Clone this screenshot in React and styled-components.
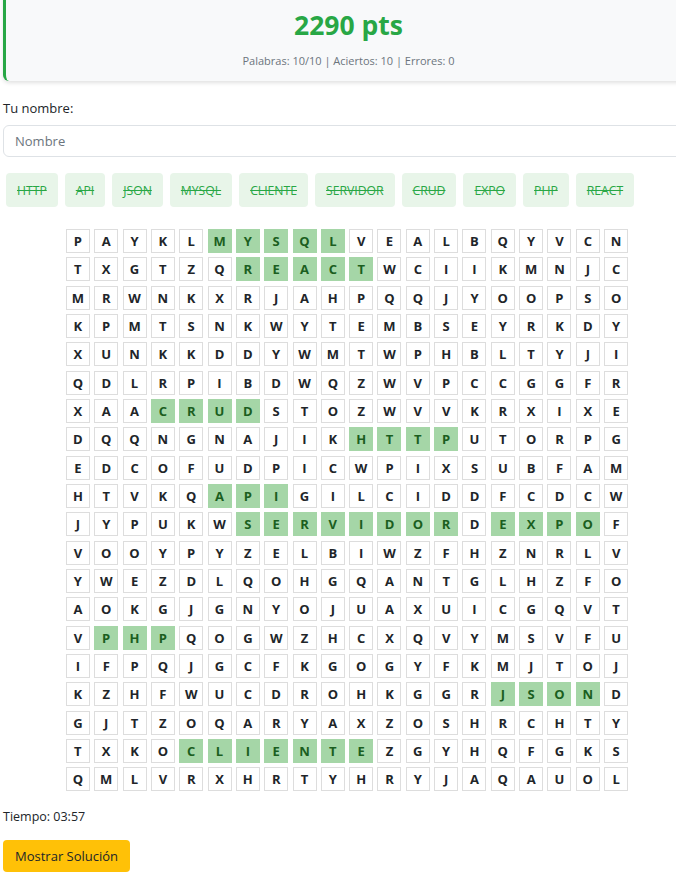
import React from 'react'
import styled, { createGlobalStyle } from 'styled-components'

const GlobalStyle = createGlobalStyle`
  body {
    margin: 0;
    overflow-x: hidden;
    background: #fff;
    font-family: "Open Sans", "Noto Sans", sans-serif;
    color: #212529;
  }
`

const GRID = [
  'PAYKLMYSQLVEALBQYVCN',
  'TXGTZQREACTWCIIKMNJC',
  'MRWNKXRJAHPQQJYOOPSO',
  'KPMTSNKWYTEMBSEYRKDY',
  'XUNKKDDYWMTWPHBLTYJI',
  'QDLRPIBDWQZWVPCCGGFR',
  'XAACRUDSTOZWVVKRXIXE',
  'DQQNGNAJIKHTTPUTORPG',
  'EDCOFUDPICWPIXSUBFAM',
  'HTVKQAPIGILCIDDFCDCW',
  'JYPUKWSERVIDORDEXPOF',
  'VOOYPYZELBIWZFHZNRLV',
  'YWEZDLQOHGQANTGLHZFO',
  'AOKGJGNYOJUAXUICGQVT',
  'VPHPQOGWZHCXQVYMSVFU',
  'IFPQJGCFKGOGYFKMJTOJ',
  'KZHFWUCDROHKGGRJSOND',
  'GJTZOQARYAXZOSHRCHTY',
  'TXKOCLIENTEZGYHQFGKS',
  'QMLVRXHRTYHRYJAQAUOL',
]

// [row, fromCol, toCol] (0-based, inclusive)
const FOUND = [
  [0, 5, 9],
  [1, 6, 10],
  [6, 3, 6],
  [7, 10, 13],
  [9, 5, 7],
  [10, 6, 13],
  [10, 15, 18],
  [14, 1, 3],
  [16, 15, 18],
  [18, 4, 10],
]

const WORDS = ['HTTP', 'API', 'JSON', 'MYSQL', 'CLIENTE', 'SERVIDOR', 'CRUD', 'EXPO', 'PHP', 'REACT']

const isFound = (r, c) => FOUND.some(([fr, a, b]) => fr === r && c >= a && c <= b)

function App() {
  return (
    <Page>
      <GlobalStyle />
      <ScoreCard>
        <Points>2290 pts</Points>
        <Stats>Palabras: 10/10 | Aciertos: 10 | Errores: 0</Stats>
      </ScoreCard>

      <Label>Tu nombre:</Label>
      <NameInput placeholder="Nombre" />

      <WordList>
        {WORDS.map((w) => (
          <Chip key={w}>{w}</Chip>
        ))}
      </WordList>

      <Board>
        {GRID.map((row, r) =>
          row.split('').map((ch, c) => (
            <Cell key={r + '-' + c} $found={isFound(r, c)}>
              {ch}
            </Cell>
          ))
        )}
      </Board>

      <Timer>Tiempo: 03:57</Timer>
      <SolveButton>Mostrar Solución</SolveButton>
    </Page>
  )
}

export default App

const Page = styled.div`
  width: 688px;
  margin-left: 3px;
  padding-bottom: 20px;
`

const ScoreCard = styled.div`
  margin-top: -8px;
  background: #f8f9fa;
  border-left: 3px solid #28a745;
  border-radius: 6px;
  box-shadow: 0 2px 4px rgba(0, 0, 0, 0.12);
  padding: 16px 16px 11px;
  text-align: center;
`

const Points = styled.h2`
  margin: 0;
  font-size: 26.5px;
  line-height: 34px;
  font-weight: 700;
  color: #28a745;
`

const Stats = styled.div`
  margin-top: 10px;
  font-size: 11px;
  line-height: 18px;
  color: #6c757d;
`

const Label = styled.div`
  margin-top: 18px;
  font-size: 13px;
  line-height: 18px;
`

const NameInput = styled.input`
  display: block;
  box-sizing: border-box;
  width: 100%;
  height: 32px;
  margin-top: 8px;
  padding: 0 11px;
  border: 1px solid #dee2e6;
  border-radius: 6px;
  font-family: inherit;
  font-size: 13px;
  color: #212529;
  &::placeholder {
    color: #6c757d;
  }
`

const WordList = styled.div`
  display: flex;
  gap: 7px;
  margin-top: 16px;
  padding-left: 3px;
`

const Chip = styled.span`
  display: flex;
  align-items: center;
  height: 34px;
  padding: 0 11px;
  background: #e8f5e9;
  border-radius: 4px;
  color: #28a745;
  font-size: 12.2px;
  text-decoration: line-through;
`

const Board = styled.div`
  display: grid;
  grid-template-columns: repeat(20, 24px);
  grid-auto-rows: 24px;
  gap: 4.33px;
  justify-content: center;
  margin-top: 22px;
`

const Cell = styled.div`
  box-sizing: border-box;
  display: flex;
  align-items: center;
  justify-content: center;
  border: 1px solid ${(p) => (p.$found ? '#a5d6a7' : '#ddd')};
  background: ${(p) => (p.$found ? '#a5d6a7' : '#fff')};
  color: ${(p) => (p.$found ? '#1b5e20' : '#212529')};
  font-size: 13px;
  font-weight: 700;
`

const Timer = styled.div`
  margin-top: 17px;
  font-size: 12.5px;
  line-height: 18px;
`

const SolveButton = styled.button`
  display: block;
  margin-top: 14px;
  height: 32px;
  padding: 0 12px;
  background: #ffc107;
  border: none;
  border-radius: 4px;
  font-family: inherit;
  font-size: 13px;
  color: #212529;
`
